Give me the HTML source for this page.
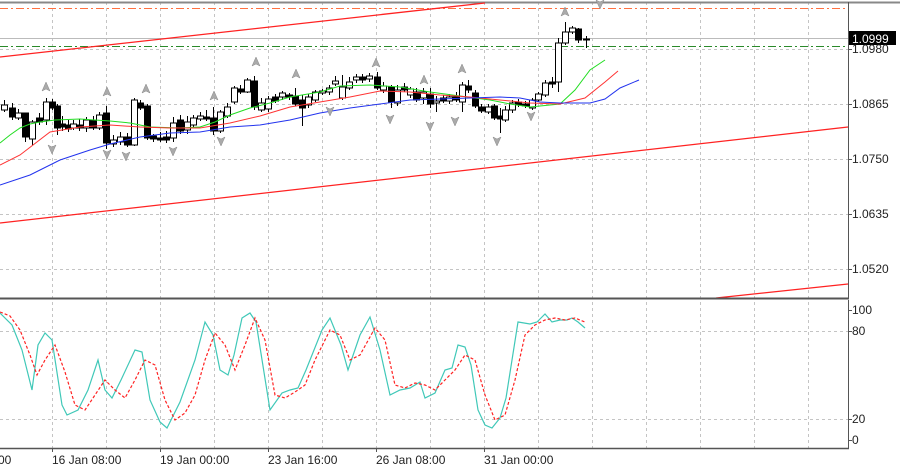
<!DOCTYPE html>
<html><head><meta charset="utf-8"><style>
body{margin:0;background:#fff;width:900px;height:472px;overflow:hidden;font-family:"Liberation Sans",sans-serif}
svg{display:block}
text{font-family:"Liberation Sans",sans-serif;font-size:12px;fill:#222}
</style></head><body>
<svg width="900" height="472" viewBox="0 0 900 472" xmlns="http://www.w3.org/2000/svg">
<rect width="900" height="472" fill="#fff"/>
<g stroke="#c4c4c4" stroke-dasharray="3,3" stroke-width="1">
<path d="M52.5 2V448M106.5 2V448M160.5 2V448M214.5 2V448M268.5 2V448M322.5 2V448M376.5 2V448M430.5 2V448M484.5 2V448M538.5 2V448M592.5 2V448M646.5 2V448M700.5 2V448M754.5 2V448M808.5 2V448"/>
<path d="M0 49.5H848M0 104.5H848M0 159.5H848M0 214.5H848M0 269.5H848M0 331.5H848M0 419.5H848"/>
</g>
<path d="M0 2.5H900" stroke="#888" stroke-width="2"/>
<path d="M0 8.5H848" stroke="#ff7040" stroke-dasharray="8,3,2,3"/>
<path d="M0 38.5H848" stroke="#bbb"/>
<path d="M0 46.5H848" stroke="#2a8a2a" stroke-dasharray="8,3,2,3"/>
<g stroke="#f22" stroke-width="1.3" fill="none">
<path d="M0 57L485 3"/><path d="M0 223L848 127"/><path d="M716 298L848 284"/>
</g>
<g id="c" stroke="#000" stroke-width="1"></g>
<polyline fill="none" stroke="#22dd22" stroke-width="1" points="0,143 10,135 20,128 30,124 40,122 55,120 80,119 110,121 130,123 150,127 180,128 200,127 215,122 230,115 250,108 270,103 290,97 320,92 340,86 370,85 400,87 430,92 460,96 490,100 510,104 530,107 560,104 575,90 590,70 605,60"/>
<polyline fill="none" stroke="#f33" stroke-width="1" points="0,165 20,155 50,132 80,127 110,125 140,127 170,128 200,128 230,123 260,116 290,107 320,102 350,97 380,91 410,92 440,95 470,97 500,100 530,103 560,104 585,98 605,82 618,71"/>
<polyline fill="none" stroke="#2233ee" stroke-width="1" points="0,185 30,175 60,160 90,150 110,144 140,137 170,133 200,132 230,127 260,125 290,120 320,113 350,108 380,104 410,100 440,99 470,98 500,97 520,98 540,102 560,103 590,103 605,99 620,88 639,80"/>
<g fill="#aaa" stroke="#888" stroke-width="0.5" id="a"></g>
<path d="M848.5 2V298M848.5 300V448" stroke="#555"/>
<path d="M0 298.5H849" stroke="#555" stroke-width="2"/>
<path d="M0 448.5H849" stroke="#555" stroke-width="1.5"/>
<g stroke="#555"><path d="M52.5 448v4M160.5 448v4M268.5 448v4M376.5 448v4M484.5 448v4M848 104.5h4M848 159.5h4M848 214.5h4M848 269.5h4M848 49.5h4M848 310.5h4M848 331.5h4M848 419.5h4M848 440.5h4"/></g>
<polyline fill="none" stroke="#40c8b8" stroke-width="1.2" points="0,313 12,325 22,350 32,390 38,345 45,333 52,340 62,405 67,415 78,410 88,390 98,360 105,390 112,398 121,380 135,350 142,352 150,400 160,422 167,428 180,402 195,360 205,322 213,335 220,370 228,375 234,355 242,318 250,313 256,322 270,410 282,393 290,390 298,388 306,370 322,330 330,318 341,345 348,370 360,335 370,317 380,350 390,395 400,390 410,388 420,382 425,398 435,393 445,370 452,368 458,345 465,347 471,365 478,410 485,425 492,428 500,418 506,398 518,322 530,324 537,322 545,314 552,322 560,320 567,320 572,318 578,322 585,328"/>
<polyline fill="none" stroke="#f22" stroke-width="1.2" stroke-dasharray="3,2" points="0,312 10,316 20,330 30,355 37,375 45,360 55,345 65,372 75,405 85,410 95,395 105,380 115,390 125,398 135,380 145,360 155,365 165,400 175,420 185,413 195,395 205,360 215,333 225,345 235,370 245,345 255,318 265,340 275,395 285,398 295,392 305,385 315,360 330,330 340,335 350,360 360,355 375,328 385,340 395,385 405,388 415,383 425,385 435,390 445,380 455,370 465,355 475,360 485,395 495,420 505,415 515,380 525,335 535,325 545,320 555,318 565,320 575,318 585,322"/>
<rect x="849" y="31" width="47" height="14" fill="#000"/>
<text x="852" y="43" style="fill:#fff">1.0999</text>
<text x="852" y="53">1.0980</text>
<text x="852" y="108">1.0865</text>
<text x="852" y="163">1.0750</text>
<text x="852" y="218">1.0635</text>
<text x="852" y="273">1.0520</text>
<text x="852" y="314">100</text>
<text x="852" y="335">80</text>
<text x="852" y="423">20</text>
<text x="852" y="444">0</text>
<text x="-2" y="464">00</text>
<text x="52" y="464">16 Jan 08:00</text>
<text x="160" y="464">19 Jan 00:00</text>
<text x="268" y="464">23 Jan 16:00</text>
<text x="376" y="464">26 Jan 08:00</text>
<text x="484" y="464">31 Jan 00:00</text>
</svg>
<script>
var C=[[4,105,110,100,112,0],[12,108,117,103,120,1],[18,113,118,109,120,0],[25,113,137,113,142,1],[32,122,139,120,145,0],[39,118,122,113,125,1],[46,102,120,98,125,0],[52,102,108,99,110,1],[57,106,128,104,135,1],[62,124,127,116,131,1],[68,125,129,120,132,1],[73,124,128,120,130,0],[79,125,128,119,131,1],[86,120,128,117,132,0],[93,120,128,116,130,1],[99,115,128,112,130,0],[106,113,143,106,149,1],[113,140,144,135,147,0],[120,137,142,132,145,0],[127,137,145,133,147,1],[134,100,145,98,146,0],[140,103,108,100,110,1],[147,106,138,104,140,1],[153,136,139,134,142,1],[160,138,140,132,142,1],[166,137,140,131,143,1],[173,123,138,117,142,0],[180,120,131,115,134,1],[187,122,130,116,134,0],[193,118,125,115,128,0],[200,116,119,112,121,0],[206,117,119,110,121,1],[213,118,131,107,135,1],[220,112,131,110,133,0],[227,107,116,103,118,0],[234,88,102,86,104,0],[240,89,92,85,94,1],[247,80,92,78,93,0],[254,81,107,76,110,1],[261,103,110,98,112,0],[268,99,109,96,112,0],[275,97,101,94,103,1],[282,93,97,91,100,0],[289,95,97,93,100,1],[295,96,104,88,106,1],[302,100,108,95,126,1],[308,97,105,94,108,0],[315,92,100,90,102,0],[322,91,93,89,95,0],[329,88,92,85,95,0],[335,81,84,76,86,0],[342,87,98,75,100,0],[349,82,88,77,90,0],[356,77,80,74,83,0],[362,77,80,74,83,1],[369,76,79,73,82,0],[377,77,88,72,90,1],[383,86,90,82,93,0],[391,87,102,85,108,1],[397,90,103,85,106,0],[404,87,90,83,92,1],[410,89,95,87,98,0],[416,92,100,88,102,1],[423,92,98,88,104,0],[430,94,104,88,108,1],[436,101,103,96,112,0],[443,98,101,95,103,1],[449,97,101,94,104,0],[456,97,100,92,102,1],[462,85,102,82,112,0],[468,86,90,80,93,1],[475,93,106,90,108,1],[481,107,111,104,113,1],[488,107,112,104,114,0],[494,106,118,104,120,1],[500,116,119,108,133,1],[505,110,120,106,122,0],[512,103,110,100,113,0],[518,102,105,99,107,1],[525,104,106,101,108,1],[532,100,108,98,110,0],[538,94,100,92,102,0],[545,83,95,80,97,0],[552,82,84,77,88,1],[558,43,82,38,92,0],[565,32,43,22,45,0],[572,28,32,26,34,0],[578,29,40,28,43,1],[586,39,40,36,48,1]];
var s='';
C.forEach(function(c){var x=c[0]+.5;s+='<line x1="'+x+'" x2="'+x+'" y1="'+c[3]+'" y2="'+c[4]+'"/>';var h=Math.max(1,c[2]-c[1]);s+='<rect x="'+(c[0]-2.5)+'" y="'+c[1]+'" width="6" height="'+h+'" fill="'+(c[5]?'#000':'#fff')+'"/>';});
document.getElementById('c').innerHTML=s;
var U=[[46,88],[107,93],[146,90],[214,97],[256,63],[296,75],[376,64],[424,81],[462,70],[565,13]];
var D=[[52,148],[107,153],[126,155],[173,150],[221,140],[330,110],[390,118],[430,125],[455,120],[497,140],[531,115],[600,3]];
var a='';
U.forEach(function(p){a+='<path d="M'+p[0]+' '+(p[1]-6)+' L'+(p[0]+4)+' '+(p[1]+3)+' L'+p[0]+' '+(p[1]+1)+' L'+(p[0]-4)+' '+(p[1]+3)+' Z"/>';});
D.forEach(function(p){a+='<path d="M'+p[0]+' '+(p[1]+6)+' L'+(p[0]+4)+' '+(p[1]-3)+' L'+p[0]+' '+(p[1]-1)+' L'+(p[0]-4)+' '+(p[1]-3)+' Z"/>';});
document.getElementById('a').innerHTML=a;
</script>
</body></html>
